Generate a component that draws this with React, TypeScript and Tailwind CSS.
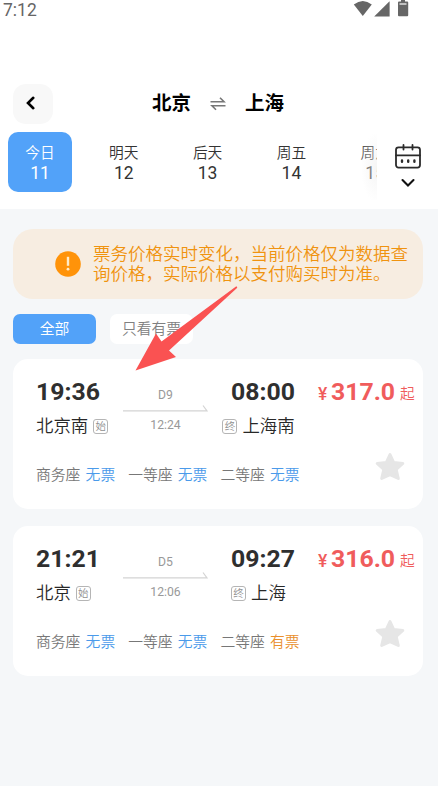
import React from 'react';

type Seat = { name: string; status: string; available?: boolean };
type Train = {
  depart: string;
  arrive: string;
  from: string;
  to: string;
  code: string;
  duration: string;
  price: string;
  seats: Seat[];
};

const days = [
  { label: '今日', date: '11' },
  { label: '明天', date: '12' },
  { label: '后天', date: '13' },
  { label: '周五', date: '14' },
  { label: '周六', date: '15' },
];

const trains: Train[] = [
  {
    depart: '19:36',
    arrive: '08:00',
    from: '北京南',
    to: '上海南',
    code: 'D9',
    duration: '12:24',
    price: '317.0',
    seats: [
      { name: '商务座', status: '无票' },
      { name: '一等座', status: '无票' },
      { name: '二等座', status: '无票' },
    ],
  },
  {
    depart: '21:21',
    arrive: '09:27',
    from: '北京',
    to: '上海',
    code: 'D5',
    duration: '12:06',
    price: '316.0',
    seats: [
      { name: '商务座', status: '无票' },
      { name: '一等座', status: '无票' },
      { name: '二等座', status: '有票', available: true },
    ],
  },
];

function StatusBar() {
  return (
    <div className="flex h-5 items-start justify-between pl-[3px] pr-[29px]">
      <span className="text-[17.5px] leading-5 text-[#666]">7:12</span>
      <svg width="56" height="18" viewBox="0 0 56 18" fill="#666">
        <path d="M0.8 4.6Q9.8 -2.4 18.8 4.6L9.8 16Z" />
        <path d="M36.6 1.2V16.6H21.2Z" />
        <path d="M48 0h4v1.5h2.200q1 0 1 1v12.700q0 1-1 1h-8.200q-1 0-1-1v-12.700q0-1 1-1h2z" />
        <path d="M46.500 4h7" stroke="#fff" strokeWidth="1.2" />
      </svg>
    </div>
  );
}

function TitleBar() {
  return (
    <div className="mt-16 flex h-10 items-center pl-[13px]">
      <button className="flex size-10 items-center justify-center rounded-[13px] bg-[#f8f8f8]">
        <svg width="12" height="16" viewBox="0 0 12 16" fill="none" stroke="#000" strokeWidth="2.600" strokeLinecap="round" strokeLinejoin="miter" className="-translate-x-[2.500px] -translate-y-px">
          <path d="M8.800 2.800L3.500 8L8.800 13.200" />
        </svg>
      </button>
      <div className="ml-[99px] flex items-center text-[19.5px] font-bold leading-10 text-black">
        <span>北京</span>
        <svg width="16" height="14" viewBox="0 0 16 14" fill="none" stroke="#777" strokeWidth="1.600" className="ml-[19px] mr-[19px]">
          <path d="M0.500 4.800H14L10 0.800" />
          <path d="M15.500 8.800H2L6 12.800" />
        </svg>
        <span>上海</span>
      </div>
    </div>
  );
}

function DateBar() {
  return (
    <div className="mt-2 flex h-[68px] pl-2">
      <div className="relative flex h-[68px] w-[369px] gap-[19.800px] overflow-hidden">
        {days.map((d, i) => (
          <div
            key={d.date}
            className={
              'flex h-[60px] w-16 shrink-0 flex-col items-center rounded-[10px] pt-[11px] ' +
              (i === 0 ? 'bg-[#52a2f9] text-white' : 'text-[#333]')
            }
          >
            <span className="text-[14.700px] font-[350] leading-5">{d.label}</span>
            <span className="text-[17.500px] leading-[21px]">{d.date}</span>
          </div>
        ))}
        <div className="absolute right-0 top-0 h-[72px] w-4 bg-[radial-gradient(ellipse_at_right,rgba(238,238,238,0.6),rgba(255,255,255,0.2)_70%,rgba(255,255,255,0))]" />
      </div>
      <div className="flex flex-1 flex-col items-center pl-px pt-3">
        <svg width="26" height="26" viewBox="0 0 26 26" fill="none" stroke="#2b2b2b" strokeWidth="1.800" strokeLinecap="round">
          <rect x="1" y="3.300" width="24" height="20.300" rx="2.500" />
          <path d="M1 11.300H25M8.500 1V5.500M17.500 1V5.500" />
          <path d="M7 16.500v1.300M13.200 16.500v1.300M19.400 16.500v1.300" strokeWidth="2.400" />
        </svg>
        <svg width="14" height="10" viewBox="0 0 14 10" fill="none" stroke="#111" strokeWidth="2.100" strokeLinecap="round" strokeLinejoin="miter" className="mt-2">
          <path d="M1.500 2L7 7.500L12.500 2" />
        </svg>
      </div>
    </div>
  );
}

function Notice() {
  return (
    <div className="flex h-[70px] items-center rounded-[20px] bg-[#f7ede1] pl-[42px]">
      <svg width="26" height="26" viewBox="0 0 26 26" className="shrink-0">
        <circle cx="13" cy="13" r="12.800" fill="#ff9309" />
        <path d="M13 5.800V14.800" stroke="#ffecc9" strokeWidth="2.400" />
        <circle cx="13" cy="18.200" r="1.400" fill="#ffecc9" />
      </svg>
      <p className="ml-3 whitespace-nowrap text-[17.500px] font-[350] leading-5 text-[#f0930f]">
        票务价格实时变化，当前价格仅为数据查
        <br />
        询价格，实际价格以支付购买时为准。
      </p>
    </div>
  );
}

function Tag({ children }: { children: React.ReactNode }) {
  return (
    <span className="flex size-[15px] items-center justify-center rounded-[3px] border border-[#b5b5b5] text-[10.500px] font-[350] leading-[13px] text-[#909090]">
      {children}
    </span>
  );
}

function TrainCard({ train }: { train: Train }) {
  return (
    <div className="h-[150px] rounded-[15px] bg-white pl-[23px] pt-[18px]">
      <div className="flex h-[62px]">
        <div className="w-[87px]">
          <div className="text-[24.800px] font-bold leading-[30px] text-[#2f2f2f]">{train.depart}</div>
          <div className="mt-[5px] flex h-7 items-center gap-[5px] text-[17.400px] font-[350] leading-7 text-[#282828]">
            <span>{train.from}</span>
            <Tag>始</Tag>
          </div>
        </div>
        <div className="flex w-[85px] flex-col items-center pt-2.5 text-[12.200px] leading-4 text-[#999]">
          <span>{train.code}</span>
          <svg width="85" height="9" viewBox="0 0 85 9" fill="none" stroke="#d4d4d4" strokeWidth="1.200">
            <path d="M0 7.800H84L80 2.500" />
          </svg>
          <span className="mt-[5px]">{train.duration}</span>
        </div>
        <div className="ml-[13px] flex w-[74px] flex-col items-center">
          <div className="self-end text-[24.800px] font-bold leading-[30px] text-[#2f2f2f]">{train.arrive}</div>
          <div className="ml-px mt-[5px] flex h-7 items-center gap-[5px] text-[17.400px] font-[350] leading-7 text-[#282828]">
            <Tag>终</Tag>
            <span>{train.to}</span>
          </div>
        </div>
        <div className="ml-[23px] flex h-[30px] items-baseline text-[#f05c5c]">
          <span className="w-[13px] text-[17.500px] font-medium leading-[30px]">¥</span>
          <span className="text-[24.800px] font-bold leading-[30px]">{train.price}</span>
          <span className="relative -top-px ml-[5px] text-[14.700px] font-[350] leading-[26px]">起</span>
        </div>
      </div>
      <div className="mt-3 flex h-12 pr-[18px]">
        <div className="mt-3 flex h-6 gap-[13px] text-[14.800px] font-[350] leading-6">
          {train.seats.map((s) => (
            <div key={s.name} className="flex gap-[5.200px] whitespace-nowrap">
              <span className="text-[#777]">{s.name}</span>
              <span className={s.available ? 'text-[#e98f2c]' : 'text-[#4a9aea]'}>{s.status}</span>
            </div>
          ))}
        </div>
        <svg width="30" height="30" viewBox="0 0 30 30" fill="#e6e6e6" stroke="#e6e6e6" strokeWidth="3" strokeLinejoin="round" className="ml-auto mt-px">
          <path d="M15 2.500L18.600 10.400L27.800 11.500L21.200 17.500L23.300 26.500L15 22.700L6.700 26.500L8.800 17.500L2.200 11.500L11.400 10.400Z" />
        </svg>
      </div>
    </div>
  );
}

export default function App() {
  return (
    <div className="relative h-[786px] w-[438px] overflow-hidden bg-[#f5f7f9] font-[Roboto,'Noto_Sans_CJK_SC',sans-serif]">
      <header className="h-[209px] bg-white">
        <StatusBar />
        <TitleBar />
        <DateBar />
      </header>
      <main className="pl-[13px] pr-[15px] pt-5">
        <Notice />
        <div className="mt-[15px] flex gap-3.5 text-[14.800px] font-[350] leading-[30px]">
          <button className="h-[30px] w-[83px] rounded-[7px] bg-[#52a2f9] text-white">全部</button>
          <button className="h-[30px] w-[83px] rounded-[7px] bg-white text-[#808080]">只看有票</button>
        </div>
        <div className="mt-[15px] flex flex-col gap-[17.400px]">
          {trains.map((t) => (
            <TrainCard key={t.code} train={t} />
          ))}
        </div>
      </main>
      <svg className="pointer-events-none absolute left-0 top-0" width="438" height="786" viewBox="0 0 438 786">
        <path d="M135.500 370.500L156 333.500L161.500 341.500L236 286.500Q238 286 237 288L169 350.500L176 357Z" fill="#fa5252" />
      </svg>
    </div>
  );
}
